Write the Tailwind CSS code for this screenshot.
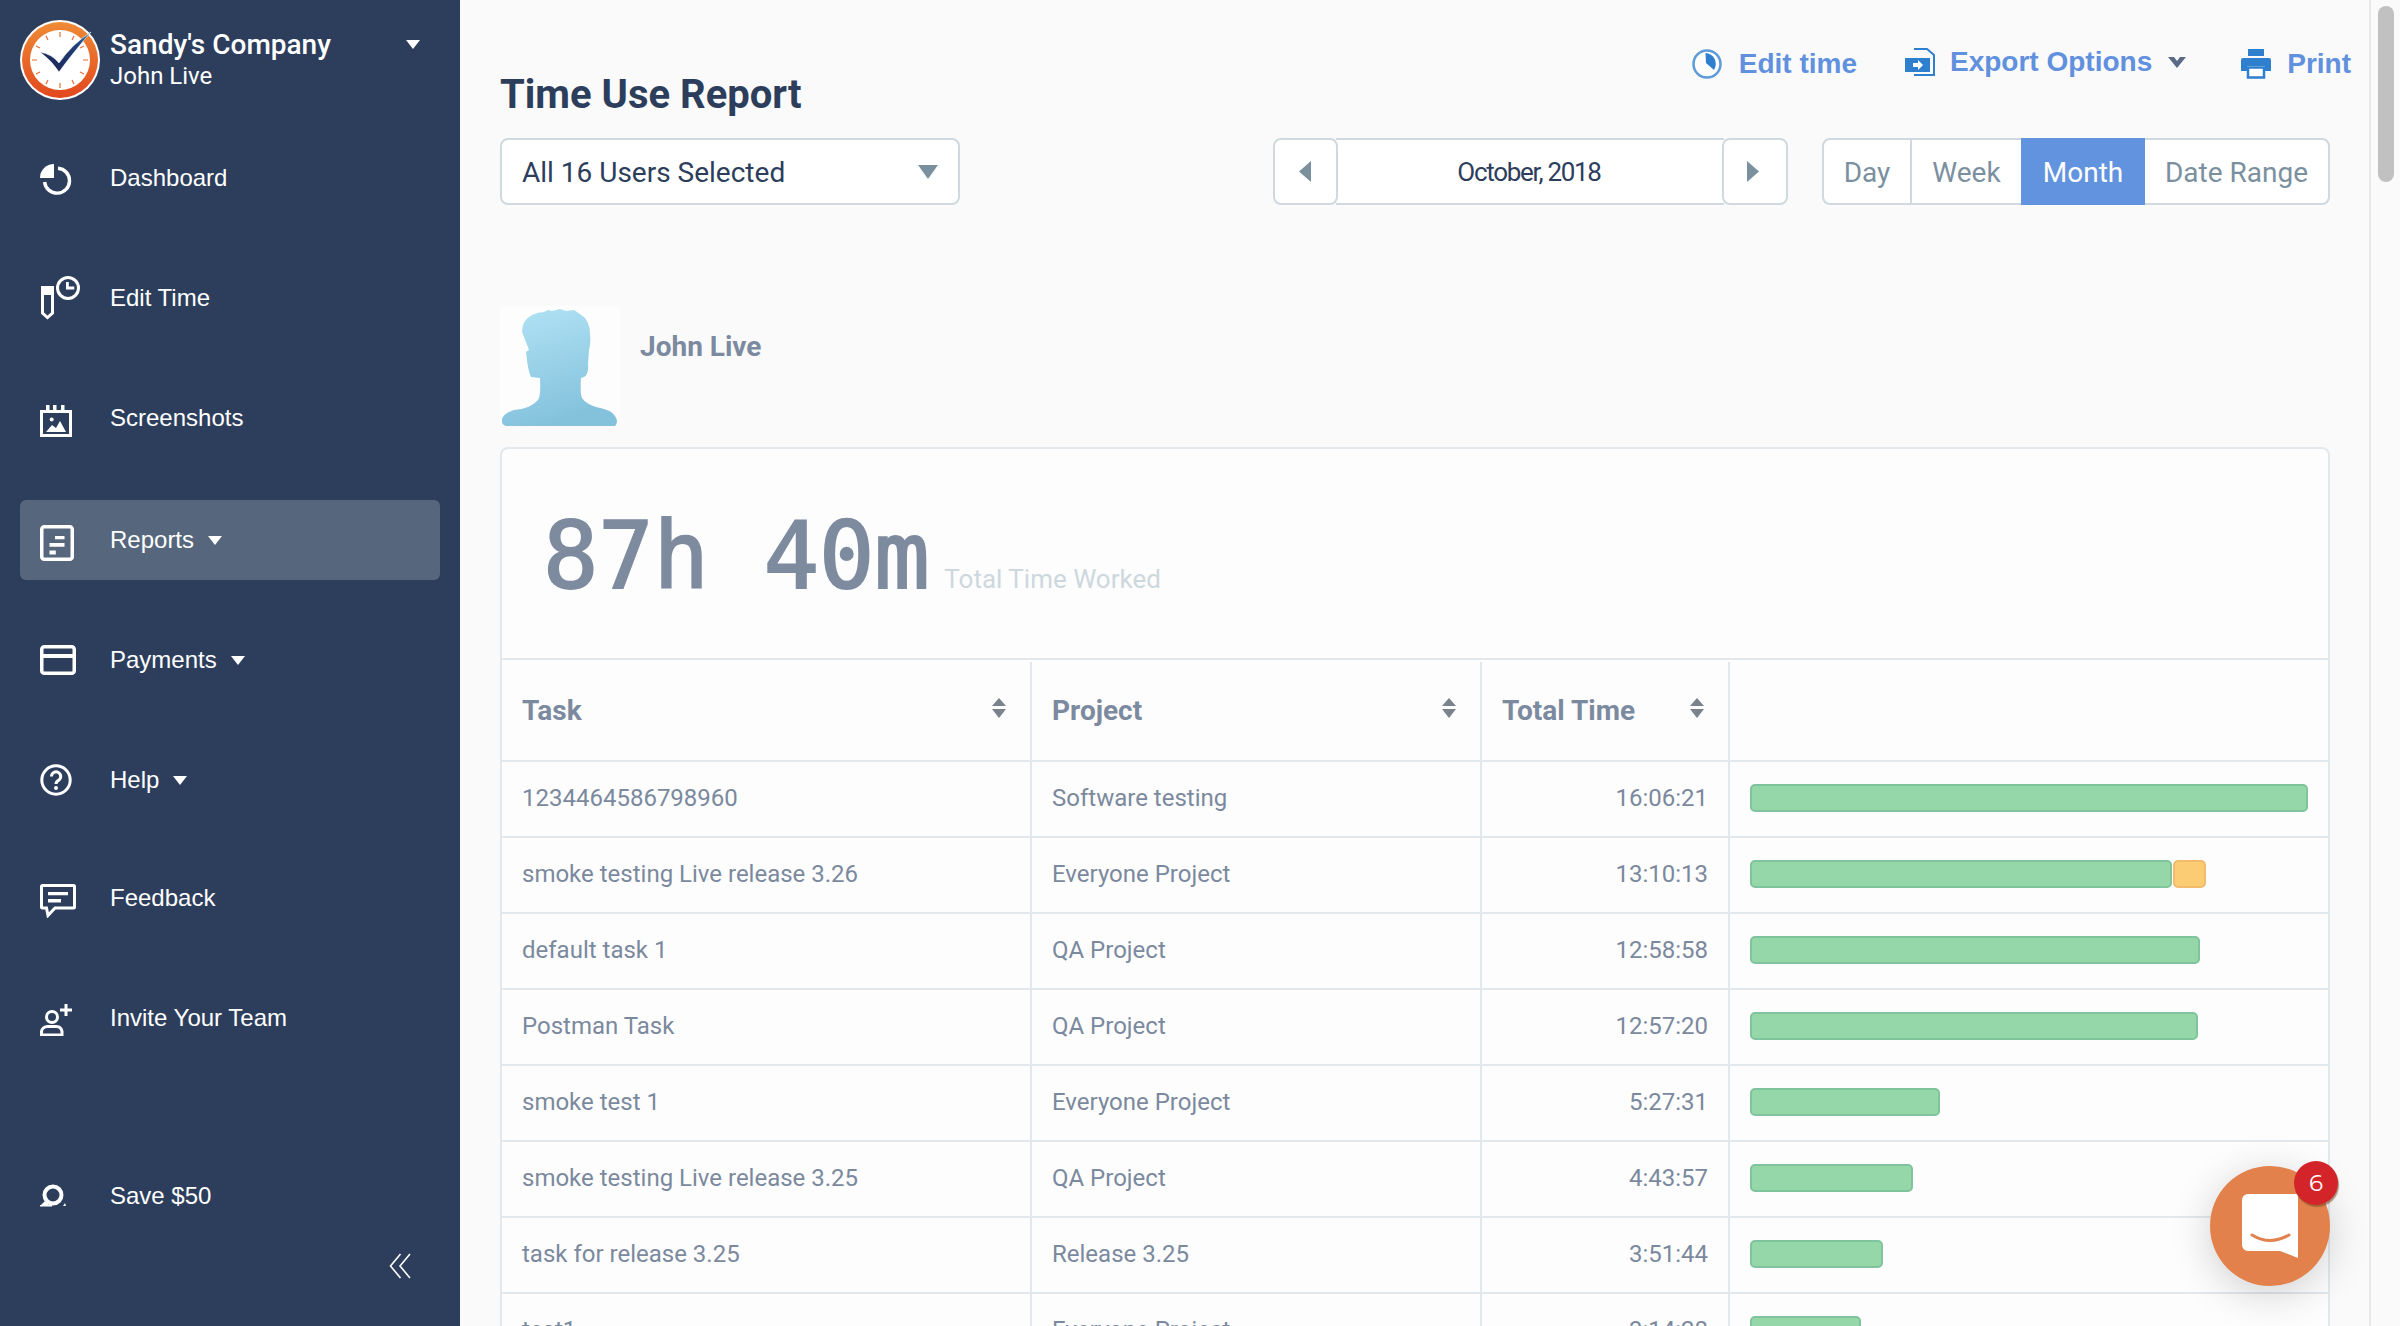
<!DOCTYPE html>
<html lang="en">
<head>
<meta charset="utf-8">
<title>Time Use Report</title>
<script src="https://cdn.jsdelivr.net/npm/@tailwindcss/browser@4"></script>
</head>
<body class="m-0 overflow-hidden bg-[#fafafa]">
<div class="relative flex h-[1326px] w-[2400px] overflow-hidden font-['Roboto',sans-serif]">

  <!-- Sidebar -->
  <aside class="flex h-full w-[460px] shrink-0 flex-col bg-[#2c3e5c] text-white">
    <div class="flex h-[138px] items-start pl-5 pt-5">
      <svg width="80" height="80" viewBox="0 0 80 80" class="shrink-0">
        <defs><linearGradient id="ring" x1="0" y1="0" x2="0" y2="1"><stop offset="0" stop-color="#ee8a35"/><stop offset="1" stop-color="#e2481f"/></linearGradient>
        <linearGradient id="tick" x1="0" y1="1" x2="1" y2="0"><stop offset="0" stop-color="#1b2350"/><stop offset="0.7" stop-color="#1f3f78"/><stop offset="1" stop-color="#2f86b0"/></linearGradient></defs>
        <circle cx="40" cy="40" r="40" fill="#fff"/>
        <circle cx="40" cy="40" r="38" fill="url(#ring)"/>
        <circle cx="40" cy="40" r="30" fill="#fff"/>
        <g stroke="#e96a33" stroke-width="1.2">
          <path d="M40 12v5M40 63v5M12 40h5M63 40h5M26 16l2 4M54 16l-2 4M16 26l4 2M64 26l-4 2M16 54l4-2M64 54l-4-2M26 64l2-4M54 64l-2-4"/>
        </g>
        <path d="M20 32Q32 34 39 43Q52 24 71 12Q52 34 39 52Q32 41 20 32Z" fill="url(#tick)" stroke="#fff" stroke-width="0.6"/>
      </svg>
      <div class="ml-[10px] mt-[8px] w-[260px]">
        <div class="text-[28px] leading-[33px] font-medium">Sandy's Company</div>
        <div class="text-[24px] leading-[30px]">John Live</div>
      </div>
      <svg width="14" height="9" viewBox="0 0 14 9" class="ml-[36px] mt-[20px]"><path d="M0 0H14L7 9Z" fill="#fff"/></svg>
    </div>

    <nav class="flex flex-col font-['Liberation_Sans',sans-serif] text-[24px]">
      <a class="mx-5 flex h-20 items-center rounded-[6px] px-5">
        <span class="flex w-[70px] shrink-0 translate-y-[2px]"><svg width="32" height="32" viewBox="0 0 32 32"><path d="M14 0A14 14 0 0 0 0 14H14Z" fill="#fff"/><path d="M18 4.2A12.5 12.5 0 1 1 4.6 18" fill="none" stroke="#fff" stroke-width="3.4"/></svg></span>
        <span>Dashboard</span>
      </a>
      <a class="mx-5 mt-10 flex h-20 items-center rounded-[6px] px-5">
        <span class="flex w-[70px] shrink-0"><svg width="40" height="44" viewBox="0 0 40 44"><path d="M2.5 12H12.5V37L7.5 41.5L2.5 37Z" fill="none" stroke="#fff" stroke-width="3"/><rect x="1" y="10" width="13" height="9" fill="#fff"/><circle cx="28" cy="12" r="10.5" fill="none" stroke="#fff" stroke-width="3"/><path d="M26 6h2.8v4.5h5.5v3h-8.3z" fill="#fff"/></svg></span>
        <span>Edit Time</span>
      </a>
      <a class="mx-5 mt-10 flex h-20 items-center rounded-[6px] px-5">
        <span class="flex w-[70px] shrink-0 translate-y-[3px]"><svg width="32" height="32" viewBox="0 0 32 32"><rect x="1.5" y="6.5" width="29" height="24" fill="none" stroke="#fff" stroke-width="3"/><path d="M6 0h3.5v6H6zM13 0h3.5v6H13zM21 0h3.5v6H21z" fill="#fff"/><circle cx="11.7" cy="14.5" r="2" fill="#fff"/><path d="M6 27L12 20L16 23L20 16L26 27Z" fill="#fff"/></svg></span>
        <span>Screenshots</span>
      </a>
      <a class="mx-5 mt-[42px] flex h-20 items-center rounded-[6px] bg-[#56677d] px-5">
        <span class="flex w-[70px] shrink-0 translate-y-[3px]"><svg width="34" height="36" viewBox="0 0 34 36"><rect x="1.75" y="1.75" width="30.5" height="32.5" rx="2.5" fill="none" stroke="#fff" stroke-width="3.5"/><path d="M15 11h9.5v3.2H15zM9.5 18h15v3.8h-15zM9.5 25.5h6.3v4h-6.3z" fill="#fff"/></svg></span>
        <span>Reports</span>
        <svg width="14" height="9" viewBox="0 0 14 9" class="ml-[14px]"><path d="M0 0H14L7 9Z" fill="#fff"/></svg>
      </a>
      <a class="mx-5 mt-10 flex h-20 items-center rounded-[6px] px-5">
        <span class="flex w-[70px] shrink-0"><svg width="36" height="30" viewBox="0 0 36 30"><rect x="1.75" y="1.75" width="32.5" height="26.5" rx="2.5" fill="none" stroke="#fff" stroke-width="3.5"/><rect x="2" y="9" width="32" height="4" fill="#fff"/></svg></span>
        <span>Payments</span>
        <svg width="14" height="9" viewBox="0 0 14 9" class="ml-[14px]"><path d="M0 0H14L7 9Z" fill="#fff"/></svg>
      </a>
      <a class="mx-5 mt-10 flex h-20 items-center rounded-[6px] px-5">
        <span class="flex w-[70px] shrink-0"><svg width="32" height="32" viewBox="0 0 32 32"><circle cx="16" cy="16" r="14.2" fill="none" stroke="#fff" stroke-width="3"/><path d="M11.5 12.5A4.6 4.6 0 1 1 18.5 16.4C16.8 17.4 16 18 16 20" fill="none" stroke="#fff" stroke-width="3"/><circle cx="16" cy="24" r="2" fill="#fff"/></svg></span>
        <span>Help</span>
        <svg width="14" height="9" viewBox="0 0 14 9" class="ml-[14px]"><path d="M0 0H14L7 9Z" fill="#fff"/></svg>
      </a>
      <a class="mx-5 mt-[38px] flex h-20 items-center rounded-[6px] px-5">
        <span class="flex w-[70px] shrink-0 translate-y-[3px]"><svg width="36" height="34" viewBox="0 0 36 34"><path d="M2.5 1.5H33.5A1 1 0 0 1 34.5 2.5V23A1 1 0 0 1 33.5 24H15L8 31.5L6.5 24H2.5A1 1 0 0 1 1.5 23V2.5A1 1 0 0 1 2.5 1.5Z" fill="none" stroke="#fff" stroke-width="3"/><path d="M8 8h20v3.2H8zM8 15h13v3.4H8z" fill="#fff"/></svg></span>
        <span>Feedback</span>
      </a>
      <a class="mx-5 mt-10 flex h-20 items-center rounded-[6px] px-5">
        <span class="flex w-[70px] shrink-0 translate-y-[2px]"><svg width="32" height="32" viewBox="0 0 32 32"><circle cx="12" cy="13" r="5.5" fill="none" stroke="#fff" stroke-width="3"/><path d="M1.5 31V27.5A6 6 0 0 1 7.5 22.5H16.5A6 6 0 0 1 22 27.5V31Z" fill="none" stroke="#fff" stroke-width="3"/><path d="M20 4.5h4.5V0h3v4.5H32v3h-4.5V12h-3V7.500H20z" fill="#fff"/></svg></span>
        <span>Invite Your Team</span>
      </a>
      <a class="mx-5 mt-[98px] flex h-20 items-center rounded-[6px] px-5">
        <span class="flex w-[70px] shrink-0"><svg width="28" height="24" viewBox="0 0 28 24"><circle cx="13" cy="11" r="8.500" fill="none" stroke="#fff" stroke-width="4"/><path d="M0 22L6 16L9 21.500Z" fill="#fff"/><rect x="0" y="21" width="12" height="1.500" fill="#fff"/><path d="M23 22L25 19L26 22Z" fill="#fff"/></svg></span>
        <span>Save $50</span>
      </a>
    </nav>
    <div class="flex justify-end pr-[49px] pt-[17px]">
      <svg width="22" height="26" viewBox="0 0 22 26" fill="none" stroke="#fff" stroke-width="1.600"><path d="M11.500 1L1.500 13L11.500 25"/><path d="M21 1L11 13L21 25"/></svg>
    </div>
  </aside>

  <!-- Main -->
  <main class="h-full w-[1909px] shrink-0 pl-10">
    <div class="flex h-[138px] justify-between">
      <h1 class="m-0 mt-[72px] text-[40px] leading-[46px] font-bold text-[#2c3e5c]">Time Use Report</h1>
      <div class="mr-[18px] flex h-[124px] items-center gap-0 font-['Liberation_Sans',sans-serif] text-[28px] font-bold text-[#6090de]">
        <svg width="30" height="30" viewBox="0 0 30 30" class="mt-[3px]"><circle cx="15" cy="15" r="13.500" fill="#fff" stroke="#5d9bd9" stroke-width="2.500"/><path d="M13.500 4A11 11 0 0 1 22 21L14 14Z" fill="#2f7fcf"/></svg>
        <span class="ml-[17px] mt-[3px]">Edit time</span>
        <svg width="32" height="30" viewBox="0 0 32 30" class="ml-[48px]"><path d="M9 2H22L29 8V28H9" fill="none" stroke="#2f7fcf" stroke-width="2"/><path d="M0 11H25V25H0Z" fill="#2f7fcf"/><path d="M8 16h5v-3l5 5l-5 5v-3H8z" fill="#fff"/></svg>
        <span class="ml-[13px]">Export Options</span>
        <svg width="18" height="11" viewBox="0 0 18 11" class="ml-[16px]"><path d="M0 0H6L9 4L12 0H18L9 11Z" fill="#5b6b85"/></svg>
        <svg width="30" height="30" viewBox="0 0 30 30" class="ml-[55px] mt-[3px]"><path d="M7 0H23V7H7Z" fill="#2f7fcf"/><path d="M2 9H28A2 2 0 0 1 30 11V22H24V17H6V22H0V11A2 2 0 0 1 2 9Z" fill="#2f7fcf"/><path d="M7 18.500H23V28.500H7Z" fill="#fff" stroke="#2f7fcf" stroke-width="2.500"/></svg>
        <span class="ml-[16px] mt-[3px]">Print</span>
      </div>
    </div>

    <div class="flex h-[67px] items-stretch">
      <div class="flex w-[460px] items-center justify-between rounded-[8px] border-2 border-[#cfd9df] bg-white pl-[20px] pr-[20px] pt-[2px] text-[28px] text-[#2c3e5c]">
        <span>All 16 Users Selected</span>
        <svg width="20" height="14" viewBox="0 0 20 14" class="-mt-[2px]"><path d="M0 0H20L10 14Z" fill="#7b909f"/></svg>
      </div>
      <div class="ml-[313px] flex w-[515px] items-stretch">
        <button class="relative z-10 flex w-[65px] items-center justify-center rounded-[8px] border-2 border-[#cfd9df] bg-white pr-[2px]"><svg width="12" height="21" viewBox="0 0 12 21"><path d="M12 0V21L0 10.500Z" fill="#7b909f"/></svg></button>
        <div class="-mx-[2px] flex flex-1 items-center justify-center border-y-2 border-[#cfd9df] bg-white pt-[2px] pr-[2px] text-[26px] tracking-[-1.300px] text-[#2c3e5c]">October, 2018</div>
        <button class="relative z-10 flex w-[66px] items-center justify-center rounded-[8px] border-2 border-[#cfd9df] bg-white pr-[4px]"><svg width="12" height="21" viewBox="0 0 12 21"><path d="M0 0V21L12 10.500Z" fill="#7b909f"/></svg></button>
      </div>
      <div class="ml-[34px] flex w-[508px] items-stretch rounded-[8px] border-2 border-[#cfd9df] bg-white text-[28px] text-[#7b909f]">
        <span class="flex w-[88px] items-center justify-center border-r-2 border-[#cfd9df] pt-[2px]">Day</span>
        <span class="flex w-[109px] items-center justify-center pt-[2px]">Week</span>
        <span class="-my-[2px] flex w-[124px] items-center justify-center bg-[#6293de] pt-[2px] text-white">Month</span>
        <span class="flex flex-1 items-center justify-center pt-[2px]">Date Range</span>
      </div>
    </div>

    <div class="mt-[101px] flex h-[120px]">
      <div class="h-[120px] w-[120px] rounded-[6px] bg-[#fdfdfd]">
        <svg width="120" height="120" viewBox="0 0 120 120"><defs><linearGradient id="sil" x1="0" y1="0" x2="0.300" y2="1"><stop offset="0" stop-color="#b3e3f6"/><stop offset="1" stop-color="#84c2dc"/></linearGradient></defs><path d="M6 120Q1 119 2 113Q4 107 14 104Q30 103 38 94Q41 90 40 72L31 71Q28 64 27 54L26 46L29 44Q26 36 22 26Q22 14 32 9Q38 6 44 6L48 4L52 5L60 3L66 5L74 4L80 8Q90 14 90 28Q91 36 89 44L88 58Q89 68 84 71L81 72Q80 88 82 92Q86 98 96 101Q112 104 115 110Q119 116 115 120Z" fill="url(#sil)"/></svg>
      </div>
      <div class="ml-5 mt-[25px] text-[28px] leading-[32px] font-bold text-[#7b8a9f]">John Live</div>
    </div>

    <section class="mt-[21px] w-[1830px] rounded-t-[8px] border-2 border-b-0 border-[#e2e8ec] bg-[#fdfdfd] text-[24px] text-[#7b899e]">
      <div class="flex h-[209px] items-start pl-[41px] pt-[52px]">
        <span class="font-['DejaVu_Sans_Mono',monospace] text-[92px] leading-[112px] tracking-[-0.200px] text-[#7e8b9f] [-webkit-text-stroke:2px_#7e8b9f]">87h 40m</span>
        <span class="ml-[15px] mt-[62px] text-[26px] leading-[32px] text-[#cdd8de]">Total Time Worked</span>
      </div>

      <div class="flex h-[102px] border-t-2 border-[#e2e8ec] pt-[2px] text-[28px] font-bold text-[#7b8a9f]">
        <div class="relative flex w-[530px] items-center border-r-2 border-[#e2e8ec] pl-5">Task
          <svg width="14" height="20" viewBox="0 0 14 20" class="absolute right-[24px] top-[36px]"><path d="M7 0L14 8H0ZM0 11H14L7 20Z" fill="#7a828c"/></svg></div>
        <div class="relative flex w-[450px] items-center border-r-2 border-[#e2e8ec] pl-5">Project
          <svg width="14" height="20" viewBox="0 0 14 20" class="absolute right-[24px] top-[36px]"><path d="M7 0L14 8H0ZM0 11H14L7 20Z" fill="#7a828c"/></svg></div>
        <div class="relative flex w-[248px] items-center border-r-2 border-[#e2e8ec] pl-5">Total Time
          <svg width="14" height="20" viewBox="0 0 14 20" class="absolute right-[24px] top-[36px]"><path d="M7 0L14 8H0ZM0 11H14L7 20Z" fill="#7a828c"/></svg></div>
        <div class="flex-1"></div>
      </div>

      <div class="flex h-[76px] border-t-2 border-[#e2e8ec]">
        <div class="flex w-[530px] items-center border-r-2 border-[#e2e8ec] pb-[2px] pl-5">1234464586798960</div>
        <div class="flex w-[450px] items-center border-r-2 border-[#e2e8ec] pb-[2px] pl-5">Software testing</div>
        <div class="flex w-[248px] items-center justify-end border-r-2 border-[#e2e8ec] pb-[2px] pr-5">16:06:21</div>
        <div class="flex flex-1 items-center pb-[2px] pl-5"><div class="h-7 w-[558px] rounded-[5px] border-2 border-[#7fc49c] bg-[#95d7a8]"></div></div>
      </div>
      <div class="flex h-[76px] border-t-2 border-[#e2e8ec]">
        <div class="flex w-[530px] items-center border-r-2 border-[#e2e8ec] pb-[2px] pl-5">smoke testing Live release 3.26</div>
        <div class="flex w-[450px] items-center border-r-2 border-[#e2e8ec] pb-[2px] pl-5">Everyone Project</div>
        <div class="flex w-[248px] items-center justify-end border-r-2 border-[#e2e8ec] pb-[2px] pr-5">13:10:13</div>
        <div class="flex flex-1 items-center pb-[2px] pl-5"><div class="h-7 w-[422px] rounded-[5px] border-2 border-[#7fc49c] bg-[#95d7a8]"></div><div class="ml-px h-7 w-[33px] rounded-[5px] border-2 border-[#f2bc6c] bg-[#fccc74]"></div></div>
      </div>
      <div class="flex h-[76px] border-t-2 border-[#e2e8ec]">
        <div class="flex w-[530px] items-center border-r-2 border-[#e2e8ec] pb-[2px] pl-5">default task 1</div>
        <div class="flex w-[450px] items-center border-r-2 border-[#e2e8ec] pb-[2px] pl-5">QA Project</div>
        <div class="flex w-[248px] items-center justify-end border-r-2 border-[#e2e8ec] pb-[2px] pr-5">12:58:58</div>
        <div class="flex flex-1 items-center pb-[2px] pl-5"><div class="h-7 w-[450px] rounded-[5px] border-2 border-[#7fc49c] bg-[#95d7a8]"></div></div>
      </div>
      <div class="flex h-[76px] border-t-2 border-[#e2e8ec]">
        <div class="flex w-[530px] items-center border-r-2 border-[#e2e8ec] pb-[2px] pl-5">Postman Task</div>
        <div class="flex w-[450px] items-center border-r-2 border-[#e2e8ec] pb-[2px] pl-5">QA Project</div>
        <div class="flex w-[248px] items-center justify-end border-r-2 border-[#e2e8ec] pb-[2px] pr-5">12:57:20</div>
        <div class="flex flex-1 items-center pb-[2px] pl-5"><div class="h-7 w-[448px] rounded-[5px] border-2 border-[#7fc49c] bg-[#95d7a8]"></div></div>
      </div>
      <div class="flex h-[76px] border-t-2 border-[#e2e8ec]">
        <div class="flex w-[530px] items-center border-r-2 border-[#e2e8ec] pb-[2px] pl-5">smoke test 1</div>
        <div class="flex w-[450px] items-center border-r-2 border-[#e2e8ec] pb-[2px] pl-5">Everyone Project</div>
        <div class="flex w-[248px] items-center justify-end border-r-2 border-[#e2e8ec] pb-[2px] pr-5">5:27:31</div>
        <div class="flex flex-1 items-center pb-[2px] pl-5"><div class="h-7 w-[190px] rounded-[5px] border-2 border-[#7fc49c] bg-[#95d7a8]"></div></div>
      </div>
      <div class="flex h-[76px] border-t-2 border-[#e2e8ec]">
        <div class="flex w-[530px] items-center border-r-2 border-[#e2e8ec] pb-[2px] pl-5">smoke testing Live release 3.25</div>
        <div class="flex w-[450px] items-center border-r-2 border-[#e2e8ec] pb-[2px] pl-5">QA Project</div>
        <div class="flex w-[248px] items-center justify-end border-r-2 border-[#e2e8ec] pb-[2px] pr-5">4:43:57</div>
        <div class="flex flex-1 items-center pb-[2px] pl-5"><div class="h-7 w-[163px] rounded-[5px] border-2 border-[#7fc49c] bg-[#95d7a8]"></div></div>
      </div>
      <div class="flex h-[76px] border-t-2 border-[#e2e8ec]">
        <div class="flex w-[530px] items-center border-r-2 border-[#e2e8ec] pb-[2px] pl-5">task for release 3.25</div>
        <div class="flex w-[450px] items-center border-r-2 border-[#e2e8ec] pb-[2px] pl-5">Release 3.25</div>
        <div class="flex w-[248px] items-center justify-end border-r-2 border-[#e2e8ec] pb-[2px] pr-5">3:51:44</div>
        <div class="flex flex-1 items-center pb-[2px] pl-5"><div class="h-7 w-[133px] rounded-[5px] border-2 border-[#7fc49c] bg-[#95d7a8]"></div></div>
      </div>
      <div class="flex h-[76px] border-t-2 border-[#e2e8ec]">
        <div class="flex w-[530px] items-center border-r-2 border-[#e2e8ec] pb-[2px] pl-5">test1</div>
        <div class="flex w-[450px] items-center border-r-2 border-[#e2e8ec] pb-[2px] pl-5">Everyone Project</div>
        <div class="flex w-[248px] items-center justify-end border-r-2 border-[#e2e8ec] pb-[2px] pr-5">3:14:28</div>
        <div class="flex flex-1 items-center pb-[2px] pl-5"><div class="h-7 w-[111px] rounded-[5px] border-2 border-[#7fc49c] bg-[#95d7a8]"></div></div>
      </div>
    </section>
  </main>

  <!-- Scrollbar -->
  <div class="h-full flex-1 border-l-2 border-[#e8e8e8] bg-[#fafafa] pl-[7px] pt-[6px]">
    <div class="h-[176px] w-4 rounded-full bg-[#c1c1c1]"></div>
  </div>

  <!-- Chat launcher -->
  <div class="absolute left-[2210px] top-[1166px] flex h-[120px] w-[120px] items-center justify-center rounded-full bg-[#e2814b] shadow-[0_8px_40px_rgba(0,0,0,0.18)]">
    <svg width="56" height="64" viewBox="0 0 56 64"><path d="M6 0H56V64L38 57H6A6 6 0 0 1 0 51V6A6 6 0 0 1 6 0Z" fill="#fff"/><path d="M10 41Q28 52 47 41" fill="none" stroke="#e2814b" stroke-width="3" stroke-linecap="round"/></svg>
    <span class="absolute left-[84px] top-[-5px] flex h-11 w-11 items-center justify-center rounded-full bg-[#d32529] font-['Montserrat','Open_Sans',sans-serif] text-[23px] text-white shadow-[1px_2px_1px_rgba(120,80,40,0.6)]">6</span>
  </div>
</div>
</body>
</html>
